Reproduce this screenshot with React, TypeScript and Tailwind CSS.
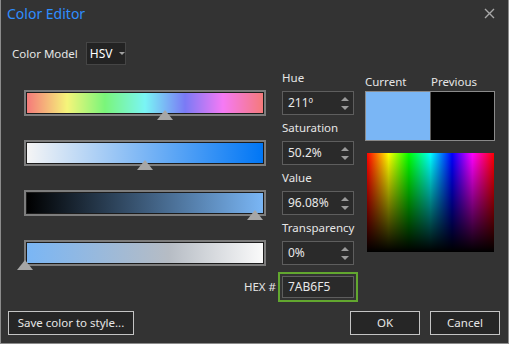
import React from "react";

const font = { fontFamily: '"Noto Sans", "Open Sans", sans-serif' };

function Thumb({ left }: { left: number }) {
  return (
    <div
      className="absolute bottom-[-6px] w-0 h-0 border-l-[8px] border-r-[8px] border-b-[10px] border-l-transparent border-r-transparent border-b-[#a6a6a6]"
      style={{ left: left - 8 }}
    />
  );
}

function Bar({ bg, thumb }: { bg: string; thumb: number }) {
  return (
    <div className="relative h-[26px] w-[242px] border-2 border-[#7d7d7d] bg-[#1c1c1c] p-[1px]">
      <div className="h-full w-full" style={{ background: bg }} />
      <Thumb left={thumb} />
    </div>
  );
}

function Spin({ value }: { value: string }) {
  return (
    <div className="flex h-[24px] w-[72px] items-center justify-between border border-[#5e5e5e] bg-[#2a2a2a] pl-[5px] pr-[4px]">
      <span className="text-[12px] text-[#e8e8e8]">{value}</span>
      <div className="flex flex-col gap-[5px]">
        <div className="h-0 w-0 border-l-[4px] border-r-[4px] border-b-[4px] border-l-transparent border-r-transparent border-b-[#9a9a9a]" />
        <div className="h-0 w-0 border-l-[4px] border-r-[4px] border-t-[4px] border-l-transparent border-r-transparent border-t-[#9a9a9a]" />
      </div>
    </div>
  );
}

function Group({ label, value }: { label: string; value: string }) {
  return (
    <div className="flex flex-col">
      <div className="flex h-[26px] items-center text-[11.5px] text-[#e6e6e6]">{label}</div>
      <Spin value={value} />
    </div>
  );
}

export default function App() {
  return (
    <div
      className="relative flex h-[344px] w-[509px] flex-col overflow-hidden border-x border-b border-[#8c8c8c] bg-[#333333] select-none"
      style={font}
    >
      {/* Title bar */}
      <div className="flex h-[26px] items-center justify-between pl-[6px] pr-[13px]">
        <span className="text-[14px] text-[#2f8eff]">Color Editor</span>
        <svg width="11" height="11" viewBox="0 0 11 11">
          <path d="M1 1 L10 10 M10 1 L1 10" stroke="#a8a8a8" strokeWidth="1.4" />
        </svg>
      </div>

      {/* Color model */}
      <div className="mt-[16px] flex h-[23px] items-center pl-[11px]">
        <span className="text-[11.5px] text-[#e6e6e6]">Color Model</span>
        <div className="ml-[8px] flex h-[23px] w-[40px] items-center border border-[#454545] bg-[#232323] pl-[3px]">
          <span className="text-[12px] text-white">HSV</span>
          <div className="ml-[6px] h-0 w-0 border-l-[3px] border-r-[3px] border-t-[3px] border-l-transparent border-r-transparent border-t-[#a0a0a0]" />
        </div>
      </div>

      {/* Main */}
      <div className="flex">
        <div className="flex w-[357px] flex-col">
          <div className="flex">
            <div className="ml-[23px] flex flex-col gap-[24px] pt-[25px]">
              <Bar
                thumb={139}
                bg="linear-gradient(to right, #f57a7a, #f5f57a 17%, #7af57a 33%, #7af5f5 50%, #7a7af5 67%, #f57af5 83%, #f57a7a)"
              />
              <Bar thumb={119} bg="linear-gradient(to right, #f5f5f5, #0076f5)" />
              <Bar thumb={229} bg="linear-gradient(to right, #000000, #7ab6f5)" />
              <Bar thumb={-1} bg="linear-gradient(to right, #7ab6f5, #b6bcc4 60%, #fafafa)" />
            </div>
            <div className="ml-[16px] flex flex-col">
              <Group label="Hue" value="211º" />
              <Group label="Saturation" value="50.2%" />
              <Group label="Value" value="96.08%" />
              <Group label="Transparency" value="0%" />
            </div>
          </div>
          <div className="mt-[6px] flex items-center justify-end">
            <span className="mr-[2px] text-[11.5px] text-[#e6e6e6]">HEX #</span>
            <div className="h-[30px] w-[80px] border-2 border-[#62a72f] p-[2px]">
              <div className="flex h-full w-full items-center border border-[#5e5e5e] bg-[#2a2a2a] pl-[5px]">
                <span className="text-[12px] text-[#e8e8e8]">7AB6F5</span>
              </div>
            </div>
          </div>
        </div>

        <div className="ml-[7px] flex w-[130px] flex-col">
          <div className="flex h-[26px] items-end pb-[1px] text-[11.5px] text-[#e6e6e6]">
            <span className="w-[66px]">Current</span>
            <span>Previous</span>
          </div>
          <div className="flex h-[50px] border border-[#8a8a8a]">
            <div className="h-full w-[64px] bg-[#7ab6f5]" />
            <div className="h-full flex-1 border-l border-[#5a5a5a] bg-black" />
          </div>
          <div
            className="ml-[2px] mt-[12px] h-[99px] w-[127px]"
            style={{
              background:
                "linear-gradient(to bottom, rgba(0,0,0,0), #000), linear-gradient(to right, #ff0000, #ffff00 17%, #00ff00 33%, #00ffff 50%, #0000ff 67%, #ff00ff 83%, #ff0000)",
            }}
          />
        </div>
      </div>

      {/* Buttons */}
      <div className="mt-[9px] flex h-[24px] pl-[7px]">
        <button className="h-[24px] w-[126px] border border-[#c4c4c4] bg-[#262626] text-[11.5px] text-[#e6e6e6]">
          Save color to style...
        </button>
        <div className="flex-1" />
        <button className="h-[24px] w-[70px] border border-[#c4c4c4] bg-[#262626] text-[11.5px] text-[#e6e6e6]">
          OK
        </button>
        <button className="ml-[10px] mr-[8px] h-[24px] w-[70px] border border-[#c4c4c4] bg-[#262626] text-[11.5px] text-[#e6e6e6]">
          Cancel
        </button>
      </div>
    </div>
  );
}
